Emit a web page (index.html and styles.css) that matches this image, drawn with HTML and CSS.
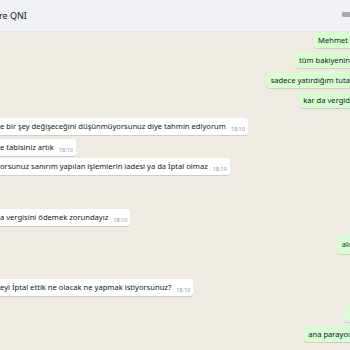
FILE: index.html
```html
<!DOCTYPE html>
<html lang="tr">
<head>
    <meta charset="UTF-8">
    <meta name="viewport" content="width=device-width, initial-scale=1.0">
    <title>Sohbet</title>
    <link rel="stylesheet" href="styles.css">
</head>
<body>
	<div class="app">
	    <div class="header">
		<span class="header-title">re QNI</span>
		<span class="header-icon"></span>
	    </div>
	    <div class="chat">
		<div class="row out"><div class="bubble">Mehmet&nbsp;</div></div>
		<div class="row out"><div class="bubble">tüm bakiyenin</div></div>
		<div class="row out"><div class="bubble">sadece yatırdığım tuta</div></div>
		<div class="row out"><div class="bubble">kar da vergid</div></div>

		<div class="row in gap-m"><div class="bubble">e bir şey değişeceğini düşünmüyorsunuz diye tahmin ediyorum<span class="time">18:10</span></div></div>
		<div class="row in"><div class="bubble">e tabisiniz artık<span class="time">18:10</span></div></div>
		<div class="row in gap-xs"><div class="bubble">orsunuz sanırım yapılan işlemlerin iadesi ya da İptal olmaz<span class="time">18:10</span></div></div>

		<div class="row in gap-xl"><div class="bubble">a vergisini ödemek zorundayız<span class="time">18:10</span></div></div>

		<div class="row out gap-s"><div class="bubble tall">alı</div></div>

		<div class="row in gap-l"><div class="bubble">eyi İptal ettik ne olacak ne yapmak istiyorsunuz?<span class="time">18:10</span></div></div>

		<div class="row out gap-m"><div class="bubble">&nbsp;</div></div>
		<div class="row out"><div class="bubble">ana parayoı</div></div>
	    </div>
	</div>
</body>
</html>
```
FILE: styles.css
```css
	body {
	    margin: 0;
	    font-family: "Noto Sans", "Liberation Sans", sans-serif;
	    color: #111b21;
	    background-color: #efeae2;
	}
	.app {
	    width: 350px;
	    height: 350px;
	    overflow: hidden;
	}

	.header {
	    display: flex;
	    align-items: center;
	    justify-content: space-between;
	    height: 31px;
	    background-color: #f0f2f5;
	    border-bottom: 1px solid #e9e7e2;
	}
	.header-title {
	    font-size: 9px;
	    margin-left: -1px;
	}
	.header-icon {
	    width: 10px;
	    height: 5px;
	    background-color: #a9a9a9; /* 右上角的灰色图标，只露出一部分 */
	    border-radius: 1px;
	    margin-right: -2px;
	    margin-top: -2px;
	}

	.chat {
	    display: flex;
	    flex-direction: column;
	    background-color: #efeae2;
	}
	.row {
	    display: flex;
	    margin-top: 4px;
	}
	.row.out {
	    justify-content: flex-end;
	}
	.row.in {
	    justify-content: flex-start;
	}
	/* 消息之间的间距 */
	.gap-xs { margin-top: 2px; }
	.gap-s { margin-top: 8px; }
	.gap-m { margin-top: 10px; }
	.gap-l { margin-top: 25px; }
	.gap-xl { margin-top: 34px; }
	.chat .row:first-child { margin-top: 0; }

	.bubble {
	    font-size: 7.6px;
	    line-height: 10px;
	    padding: 3px 4px;
	    border-radius: 3px;
	    white-space: nowrap;
	    box-shadow: 0 1px 0.5px rgba(11, 20, 26, 0.13);
	}
	.out .bubble {
	    background-color: #d9fdd3;
	    margin-right: -4px; /* 右边被截掉 */
	}
	.in .bubble {
	    background-color: #ffffff;
	    margin-left: -4px;
	    padding-right: 3px;
	}
	.bubble.tall {
	    padding-top: 5px;
	    padding-bottom: 5px;
	}

	.time {
	    display: inline-block;
	    font-size: 5.5px;
	    line-height: 6px;
	    color: #8696a0;
	    margin-left: 5px;
	    vertical-align: -2px;
	}
```
